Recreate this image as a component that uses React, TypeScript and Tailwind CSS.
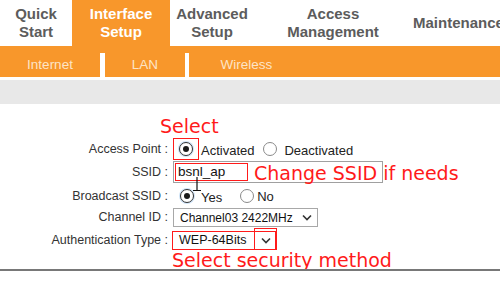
import React from 'react';

const mainTabs = [
  { top: 'Quick', bottom: 'Start', w: 'w-[72px]' },
  { top: 'Interface', bottom: 'Setup', w: 'w-[98px]', active: true },
  { top: 'Advanced', bottom: 'Setup', w: 'w-[84px]' },
  { top: 'Access', bottom: 'Management', w: 'w-[158px]' },
];

function Radio({ checked }: { checked?: boolean }) {
  return (
    <span
      className={`flex h-[14px] w-[14px] items-center justify-center rounded-full border bg-white ${
        checked ? 'border-[#333] shadow-[0_0_0_1px_#cfe3f7]' : 'border-[#8a8a8a]'
      }`}
    >
      {checked && <span className="h-[6px] w-[6px] rounded-full bg-[#1a1a1a]" />}
    </span>
  );
}

function Chevron() {
  return (
    <svg width="10" height="7" viewBox="0 0 10 7" className="block">
      <path d="M1 1.5 L5 5.5 L9 1.5" fill="none" stroke="#333" strokeWidth="1.6" />
    </svg>
  );
}

function Label({ children }: { children: React.ReactNode }) {
  return <div className="w-[168px] shrink-0 text-right text-[12.5px] text-[#333]">{children}</div>;
}

export default function App() {
  const note = "font-['DejaVu_Sans',Verdana,sans-serif] text-[19px] leading-[20px] text-[#ff1a1a]";

  return (
    <div className="h-[284px] w-[500px] overflow-hidden bg-white font-['Liberation_Sans',Arial,sans-serif]">
      {/* top menu */}
      <div className="flex h-[46px] text-[15px] font-bold leading-[18px]">
        {mainTabs.map((t) => (
          <div
            key={t.top}
            className={`${t.w} flex shrink-0 flex-col items-center justify-center ${
              t.active ? 'bg-[#f8972b] text-white' : 'text-[#5c5c5c]'
            }`}
          >
            <span>{t.top}</span>
            <span>{t.bottom}</span>
          </div>
        ))}
        <div className="flex min-w-0 items-center overflow-hidden whitespace-nowrap pl-[1px] text-[#5c5c5c]">
          Maintenance
        </div>
      </div>

      {/* sub menu */}
      <div className="h-[31px] bg-[#f8972b] pt-[7px]">
        <div className="flex h-[24px] text-[13.5px] text-[#fde4c6]">
          <div className="flex w-[100px] items-center justify-center">Internet</div>
          <div className="w-[5px] bg-white" />
          <div className="flex w-[80px] items-center justify-center">LAN</div>
          <div className="w-[4px] bg-white" />
          <div className="flex w-[115px] items-center justify-center">Wireless</div>
        </div>
      </div>

      <div className="mt-[3px] h-[24px] bg-[#e8e8e8]" />

      {/* form */}
      <div className="flex flex-col">
        <div className={`mt-[12px] h-[20px] pl-[160px] ${note}`}>Select</div>

        <div className="mt-[2px] flex h-[22px] items-center">
          <Label>Access Point :</Label>
          <div className="ml-[5px] flex items-center text-[13px] text-[#222]">
            <span className="flex h-[22px] w-[26px] items-center justify-center border border-[#ff1a1a]">
              <Radio checked />
            </span>
            <span className="ml-[2px] mt-[3px]">Activated</span>
            <span className="ml-[9px]">
              <Radio />
            </span>
            <span className="ml-[7px] mt-[3px]">Deactivated</span>
          </div>
        </div>

        <div className="mt-[1px] flex h-[22px] items-center">
          <Label>SSID :</Label>
          <div className="relative ml-[5px] h-[22px] w-[210px] border border-[#a0a0a0]">
            <div className="absolute left-[1px] top-[1px] flex h-[18px] w-[73px] items-center border border-[#ff1a1a] pl-[2px] text-[13.5px] text-[#111]">
              bsnl_ap
            </div>
            <svg width="10" height="15" viewBox="0 0 10 15" className="absolute left-[18px] top-[15px]">
              <path d="M5 0 V13 M1 13.5 H9" stroke="#111" strokeWidth="1.2" fill="none" />
            </svg>
            <div className={`absolute left-[80px] top-[1px] whitespace-nowrap ${note}`}>Change SSID if needs</div>
          </div>
        </div>

        <div className="mt-[2px] flex h-[22px] items-center">
          <Label>Broadcast SSID :</Label>
          <div className="ml-[12px] flex items-center text-[13px] text-[#222]">
            <Radio checked />
            <span className="ml-[7px] mt-[4px]">Yes</span>
            <span className="ml-[18px]">
              <Radio />
            </span>
            <span className="ml-[3px] mt-[2px]">No</span>
          </div>
        </div>

        <div className="mt-[1px] flex h-[19px] items-center">
          <Label>Channel ID :</Label>
          <div className="ml-[5px] flex h-[19px] w-[145px] items-center justify-between border border-[#a8a8a8] pl-[6px] pr-[5px] text-[12px] text-[#111]">
            <span className="whitespace-nowrap">Channel03 2422MHz</span>
            <Chevron />
          </div>
        </div>

        <div className="mt-[4px] flex h-[19px] items-center">
          <Label>Authentication Type :</Label>
          <div className="relative ml-[4px] flex h-[19px] w-[104px] items-center border border-[#ff1a1a] pl-[6px] text-[12.5px] text-[#111]">
            <span>WEP-64Bits</span>
            <div className="absolute right-[-2px] top-[-4px] flex h-[22px] w-[23px] items-center justify-center border border-[#ff1a1a] pt-[3px]">
              <Chevron />
            </div>
          </div>
        </div>

        <div className={`h-[19px] whitespace-nowrap pl-[172px] ${note}`}>Select security method</div>
        <div className="h-[2px] bg-[#787878]" />
      </div>
    </div>
  );
}
